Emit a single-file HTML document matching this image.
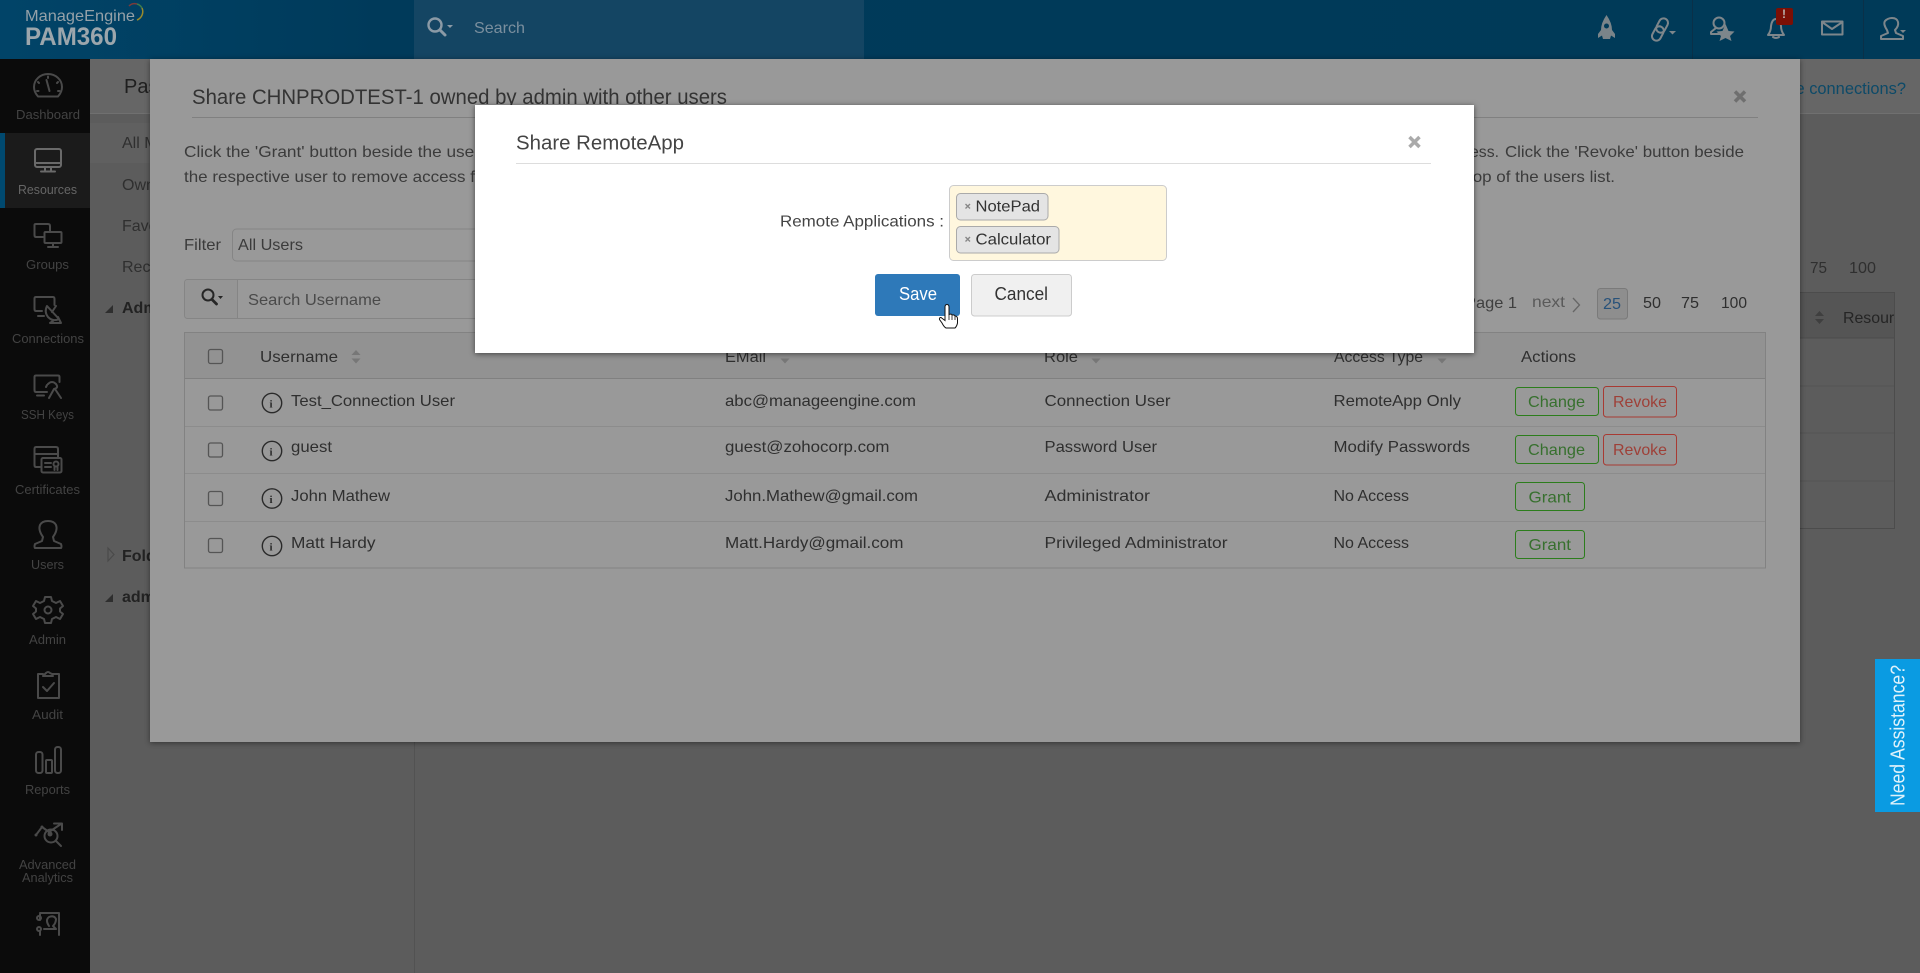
<!DOCTYPE html>
<html lang="en"><head><meta charset="utf-8"><title>PAM360 - Share RemoteApp</title>
<style>
html,body{margin:0;padding:0;background:#5c5c5c;overflow:hidden}
svg{display:block;font-family:"Liberation Sans",Arial,sans-serif}
.s{font-size:13px;fill:#434343}
.t{font-size:16px;fill:#2f2f2f}
.p{font-size:16px;fill:#3b3b3b}
.b{font-size:16px;font-weight:bold;fill:#222}
.i{fill:none;stroke:#4a4a4a;stroke-width:2;stroke-linejoin:round;stroke-linecap:round}
.h{fill:none;stroke:#7d868b;stroke-width:2;stroke-linejoin:round;stroke-linecap:round}
.cb{fill:none;stroke:#555;stroke-width:1.3}
.gb{fill:none;stroke:#2c7d1c;stroke-width:1}
.rb{fill:none;stroke:#a83a33;stroke-width:1}
.gt{font-size:16px;fill:#37702e}
.rt{font-size:16px;fill:#9e4038}
.in{fill:none;stroke:#2a2a2a;stroke-width:1.4}
.it{font-family:"Liberation Serif",serif;font-size:11px;font-weight:bold;fill:#2a2a2a}
.so{fill:#777}
</style></head><body>
<svg width="1920" height="973" viewBox="0 0 1920 973" xmlns="http://www.w3.org/2000/svg">
<defs>
<linearGradient id="hg" x1="0" x2="1" y1="0" y2="0"><stop offset="0" stop-color="#014468"/><stop offset=".2" stop-color="#003a5a"/><stop offset="1" stop-color="#003a58"/></linearGradient>
</defs>
<!-- page background -->
<rect width="1920" height="973" fill="#5c5c5c"/>
<rect x="90" y="59" width="1830" height="54" fill="#666"/>
<rect x="90" y="113" width="1830" height="1" fill="#707070"/>
<rect x="90" y="123" width="324" height="40" fill="#606060"/>
<rect x="414" y="113" width="1" height="860" fill="#525252"/>

<!-- header -->
<rect width="1920" height="59" fill="url(#hg)"/>
<rect x="414" width="450" height="59" fill="#144563"/>
<text x="25" y="21" font-size="16" fill="#95a1a8" textLength="110" lengthAdjust="spacingAndGlyphs">ManageEngine</text>
<text x="25" y="45" font-size="25" font-weight="bold" fill="#9ca6ac" textLength="92" lengthAdjust="spacingAndGlyphs">PAM360</text>
<path d="M129 6A8 8 0 0 1 137 4" fill="none" stroke="#7a3a3a" stroke-width="1.5"/>
<path d="M137 4A8 8 0 0 1 142 8" fill="none" stroke="#3d7a4d" stroke-width="1.5"/>
<path d="M142 8A9 9 0 0 1 137 20" fill="none" stroke="#998a2c" stroke-width="1.5"/>
<circle cx="435" cy="25" r="6.5" fill="none" stroke="#8b9aa6" stroke-width="2.4"/><path d="M440 30L445 35" stroke="#8b9aa6" stroke-width="3" stroke-linecap="round"/><path d="M447 25h6l-3 3z" fill="#8b9aa6"/>
<text x="474" y="33" font-size="16" fill="#7b8f9e" textLength="51" lengthAdjust="spacingAndGlyphs">Search</text>
<!-- header icons -->
<path d="M1606.5 15Q1612 23 1612 30L1615 34V38L1611 35.500L1610 39H1603L1602 35.500L1598 38V34L1601 30Q1601 23 1606.500 15Z" fill="#7a8489"/><circle cx="1606.500" cy="26" r="2.500" fill="#003a58"/>
<g transform="translate(1660 29.500) rotate(-62)"><rect class="h" x="-12" y="-4.500" width="15" height="9" rx="4.500"/><rect class="h" x="-3" y="-4.500" width="15" height="9" rx="4.500"/></g>
<path d="M1669 31h7l-3.500 3.500z" fill="#7d868b"/>
<rect x="1692" width="1" height="59" fill="#0a3048"/>
<circle cx="1719" cy="23" r="5.500" class="h"/><path class="h" d="M1716 28L1711 32V34H1722"/>
<path d="M1725.500 24L1728.500 31L1734.500 31.500L1730 36L1731.500 41L1725.500 38L1719.500 41L1721 36L1716.500 31.500L1722.500 31Z" fill="#7d868b"/>
<path class="h" d="M1768 35Q1771 31 1771 26Q1772 19 1776 19Q1780 19 1781 26Q1781 31 1784 35ZM1773 37Q1776 39 1779 37"/>
<rect x="1776" y="8" width="17" height="17" rx="2" fill="#7b0f05"/><text x="1782" y="18" font-size="12" font-weight="bold" fill="#b8b0ac">!</text>
<rect x="1822" y="21.500" width="20.500" height="13" class="h" stroke-width="1.500"/><path class="h" d="M1822 22L1832 29L1842.500 22" stroke-width="1.500"/>
<rect x="1863" width="1" height="59" fill="#0a3048"/>
<path class="h" d="M1887 30Q1883 24 1885 21Q1888 18 1892 18Q1897 18 1898 22Q1899 26 1895 30L1896 33L1903 36V39H1881V36L1888 33Z"/>
<path d="M1900 30h6l-3 3z" fill="#7d868b"/>

<!-- sidebar -->
<rect y="59" width="90" height="914" fill="#0b0b0b"/>
<rect y="133" width="90" height="75" fill="#1b1b1b"/>
<rect y="133" width="5" height="75" fill="#00496f"/>
<path class="i" d="M38 96.500H58Q62 92 62 87A14 13 0 0 0 34 87Q34 92 38 96.500Z"/><path class="i" d="M46.500 80L49.500 91M48 76.500V78M38 82l1 1M58 82l-1 1M37 91h1.500M58 91h1.500"/>
<text class="s" x="16" y="119" textLength="64" lengthAdjust="spacingAndGlyphs">Dashboard</text>
<g><rect class="i" style="stroke:#6a6a6a" x="35" y="149" width="26" height="18" rx="2"/><path class="i" style="stroke:#6a6a6a" d="M35 163H61M45 167V171M51 167V171M41 171.500H55"/></g>
<text class="s" style="fill:#666" x="18" y="194" textLength="59" lengthAdjust="spacingAndGlyphs">Resources</text>
<path class="i" d="M43 237H36Q34.500 237 34.500 235V225Q34.500 224 36 224H48Q50 224 50 226V231"/><rect class="i" x="44.500" y="232" width="17" height="11" rx="1"/><path class="i" d="M53 243V246M48 247H58"/>
<text class="s" x="26" y="269" textLength="43" lengthAdjust="spacingAndGlyphs">Groups</text>
<path class="i" d="M42 311H36Q34.500 311 34.500 309V298.500Q34.500 297 36 297H53Q54.500 297 54.500 299V305"/><path class="i" d="M38 316H44"/><path class="i" d="M47 306L59 319Q53 322 48 317Q44 312 47 306ZM52 312L56 306M53 321L50 323H61L58 317"/>
<text class="s" x="12" y="343" textLength="72" lengthAdjust="spacingAndGlyphs">Connections</text>
<path class="i" d="M47 392H36Q34.500 392 34.500 390V377Q34.500 375.500 36 375.500H58Q59.500 375.500 59.500 377V382M37 395.500H44"/><path class="i" d="M48 384Q52 380 56 384Q59 388 54 389L49 398M55 389L61 398M47 385l-1 2"/>
<text class="s" x="21" y="419" textLength="53" lengthAdjust="spacingAndGlyphs">SSH Keys</text>
<path class="i" d="M40 467H36Q34.500 467 34.500 465V449Q34.500 447 36 447H56Q58 447 58 449V457M35 454H58"/><rect class="i" x="41.500" y="458" width="20" height="14.500" rx="1.500"/><path class="i" d="M45 463H51M45 467H51" stroke-width="1.500"/><circle class="i" cx="56" cy="464" r="2.500" stroke-width="1.500"/><path class="i" d="M54.500 467V470M57.500 467V470" stroke-width="1"/>
<text class="s" x="15" y="494" textLength="65" lengthAdjust="spacingAndGlyphs">Certificates</text>
<path class="i" d="M43 537Q38 530 40 525Q42 521 48 521Q54 521 56 525Q58 530 53 537L54 541L61 544Q62 547 61 548H35Q34 547 35 544L42 541Z"/>
<text class="s" x="31" y="569" textLength="33" lengthAdjust="spacingAndGlyphs">Users</text>
<path class="i" d="M45 597H51L52 601L56 603L60 601L63 606L60 608.500V611.500L63 614L60 619L56 617L52 619L51 623H45L44 619L40 617L36 619L33 614L36 611.500V608.500L33 606L36 601L40 603L44 601Z"/><circle class="i" cx="48" cy="610" r="3.500"/>
<text class="s" x="29" y="644" textLength="37" lengthAdjust="spacingAndGlyphs">Admin</text>
<path class="i" d="M43 674H38V698H59V674H53L52 674Q50 673 50 673Q48 671 46 673L43 676H53"/><path class="i" d="M43 687L47 691L54 683"/>
<text class="s" x="32" y="719" textLength="31" lengthAdjust="spacingAndGlyphs">Audit</text>
<rect class="i" x="36" y="752" width="6.500" height="21" rx="2.500"/><rect class="i" x="46" y="760" width="6" height="13" rx="1"/><rect class="i" x="55" y="747" width="6" height="26" rx="2.500"/>
<text class="s" x="25" y="794" textLength="45" lengthAdjust="spacingAndGlyphs">Reports</text>
<path class="i" d="M36 835L42 827L49 832L61 824M54 823.500H62V830"/><circle cx="36" cy="835" r="1.500" fill="#4a4a4a"/><circle cx="42" cy="827" r="1.500" fill="#4a4a4a"/><circle class="i" cx="51" cy="836" r="6.500"/><circle cx="50" cy="834" r="2.500" fill="#4a4a4a"/><path class="i" d="M56 841L61 846"/>
<text class="s" x="19" y="869" textLength="57" lengthAdjust="spacingAndGlyphs">Advanced</text>
<text class="s" x="22" y="882" textLength="51" lengthAdjust="spacingAndGlyphs">Analytics</text>
<path class="i" d="M40 913H59V935M40 920V914M40 931V935" stroke-width="1.500"/><circle class="i" cx="39" cy="918" r="2" stroke-width="1.500"/><circle class="i" cx="39" cy="929" r="2" stroke-width="1.500"/><path class="i" d="M49 926Q45 920 49 917Q54 915 56 919Q56 923 53 926L56 929H44" stroke-width="1.500"/>

<!-- behind-modal left panel -->
<text x="124" y="93" font-size="20" fill="#1f1f1f">Passwords</text>
<text class="t" x="122" y="148" fill="#222">All My Passwords</text>
<text class="t" x="122" y="190">Owned by me</text>
<text class="t" x="122" y="231">Favourites</text>
<text class="t" x="122" y="272">Recent</text>
<path d="M105 313L113 305V313Z" fill="#2e2e2e"/>
<text class="b" x="122" y="313">Admin</text>
<path d="M108 548L114 554.500L108 561Z" fill="none" stroke="#4a4a4a" stroke-width="1.200"/>
<text class="b" x="122" y="561">Folders</text>
<path d="M105 602L113 594V602Z" fill="#2e2e2e"/>
<text class="b" x="122" y="602">admin</text>

<!-- behind-modal right content -->
<text x="1780" y="94" font-size="17" fill="#0d4a68" textLength="126" lengthAdjust="spacingAndGlyphs">live connections?</text>
<text class="t" x="1810" y="273" textLength="17" lengthAdjust="spacingAndGlyphs">75</text>
<text class="t" x="1849" y="273" textLength="27" lengthAdjust="spacingAndGlyphs">100</text>
<rect x="1700" y="292.500" width="194.500" height="45.500" fill="#555"/>
<path d="M1700 292.500H1894.500V528.500H1700M1700 338H1894.500" fill="none" stroke="#4c4c4c"/>
<path d="M1700 386H1894M1700 433H1894M1700 481H1894" stroke="#535353"/>
<path class="so" style="fill:#3f3f3f" d="M1815 316l4.500-5 4.500 5zM1815 319l4.500 5 4.500-5z"/>
<svg x="1843" y="305" width="52" height="26"><text class="t" style="fill:#252525" x="0" y="18" textLength="68" lengthAdjust="spacingAndGlyphs">Resource</text></svg>

<!-- main modal -->
<rect x="150" y="59" width="1650" height="683" fill="#999" style="filter:drop-shadow(0 1px 3px rgba(0,0,0,.45))"/>
<text x="192" y="104" font-size="21" fill="#333" textLength="535" lengthAdjust="spacingAndGlyphs">Share CHNPRODTEST-1 owned by admin with other users</text>
<rect x="192" y="117" width="1566" height="1" fill="#808080"/>
<path d="M1735 91.500L1745 101.500M1745 91.500L1735 101.500" stroke="#6f6f6f" stroke-width="3.500"/>
<text class="p" x="184" y="157" textLength="296" lengthAdjust="spacingAndGlyphs">Click the 'Grant' button beside the user</text>
<text class="p" x="184" y="182" textLength="291" lengthAdjust="spacingAndGlyphs">the respective user to remove access f</text>
<text class="p" x="1470" y="157" textLength="29" lengthAdjust="spacingAndGlyphs">ess.</text>
<text class="p" x="1505" y="157" textLength="239" lengthAdjust="spacingAndGlyphs">Click the 'Revoke' button beside</text>
<text class="p" x="1468" y="182" textLength="147" lengthAdjust="spacingAndGlyphs">top of the users list.</text>
<text class="p" x="184" y="250" textLength="37" lengthAdjust="spacingAndGlyphs">Filter</text>
<rect x="232.500" y="229" width="280" height="32" rx="4" fill="#999" stroke="#858585"/>
<text class="p" x="238" y="250" textLength="65" lengthAdjust="spacingAndGlyphs">All Users</text>
<rect x="184.500" y="279.500" width="320" height="39" rx="3" fill="#999" stroke="#858585"/>
<path d="M185 282.500Q185 280 188 280H237V318H188Q185 318 185 315Z" fill="#959595"/>
<rect x="237" y="280" width="1" height="38" fill="#858585"/>
<circle cx="208" cy="295" r="5.500" fill="none" stroke="#262626" stroke-width="2"/><path d="M212 299.500L216.500 304" stroke="#262626" stroke-width="2.800" stroke-linecap="round"/><path d="M218 296h5l-2.500 3z" fill="#262626"/>
<text class="p" style="fill:#4a4a4a" x="248" y="305" textLength="133" lengthAdjust="spacingAndGlyphs">Search Username</text>
<text class="t" style="fill:#3f3f3f" x="1465" y="308" textLength="52" lengthAdjust="spacingAndGlyphs">Page 1</text>
<text class="t" style="fill:#5a5a5a" x="1532" y="307" textLength="33" lengthAdjust="spacingAndGlyphs">next</text>
<path d="M1573 298L1579.500 305L1573 312" fill="none" stroke="#666" stroke-width="1.300"/>
<rect x="1597.500" y="288.500" width="30" height="30.500" rx="3" fill="#8e8e8e" stroke="#7a7a7a"/>
<text class="t" style="fill:#28527a" x="1603" y="309" textLength="18" lengthAdjust="spacingAndGlyphs">25</text>
<text class="t" x="1643" y="308" textLength="18" lengthAdjust="spacingAndGlyphs">50</text>
<text class="t" x="1681" y="308" textLength="18" lengthAdjust="spacingAndGlyphs">75</text>
<text class="t" x="1721" y="308" textLength="26" lengthAdjust="spacingAndGlyphs">100</text>

<!-- table -->
<rect x="184.500" y="332.500" width="1581" height="46" fill="#929292"/>
<rect x="184.500" y="332.500" width="1581" height="235.500" fill="none" stroke="#828282"/>
<path d="M185 378.500H1765" stroke="#808080"/>
<path d="M185 426.500H1765M185 473.500H1765M185 521.500H1765" stroke="#8c8c8c"/>
<rect class="cb" x="208.500" y="349.500" width="14" height="14" rx="2"/>
<rect class="cb" x="208.500" y="396" width="14" height="14" rx="2"/>
<rect class="cb" x="208.500" y="443" width="14" height="14" rx="2"/>
<rect class="cb" x="208.500" y="491.500" width="14" height="14" rx="2"/>
<rect class="cb" x="208.500" y="538.500" width="14" height="14" rx="2"/>
<text class="t" x="260" y="362" textLength="78" lengthAdjust="spacingAndGlyphs">Username</text>
<path class="so" d="M351.500 355l4.500-5 4.500 5zM351.500 358.500l4.500 5 4.500-5z"/>
<text class="t" x="725" y="362" textLength="41" lengthAdjust="spacingAndGlyphs">EMail</text>
<path class="so" d="M780.500 358.500l4.500 5 4.500-5z"/>
<text class="t" x="1044" y="362" textLength="34" lengthAdjust="spacingAndGlyphs">Role</text>
<path class="so" d="M1091.500 358.500l4.500 5 4.500-5z"/>
<text class="t" x="1334" y="362" textLength="89" lengthAdjust="spacingAndGlyphs">Access Type</text>
<path class="so" d="M1437.500 358.500l4.500 5 4.500-5z"/>
<text class="t" x="1521" y="362" textLength="55" lengthAdjust="spacingAndGlyphs">Actions</text>

<g>
<circle class="in" cx="272" cy="403" r="9.700"/><text class="it" x="269.500" y="407.500">i</text>
<text class="t" x="291" y="406" textLength="164" lengthAdjust="spacingAndGlyphs">Test_Connection User</text>
<text class="t" x="725" y="406" textLength="191" lengthAdjust="spacingAndGlyphs">abc@manageengine.com</text>
<text class="t" x="1044.500" y="406" textLength="126" lengthAdjust="spacingAndGlyphs">Connection User</text>
<text class="t" x="1333.500" y="406" textLength="127.500" lengthAdjust="spacingAndGlyphs">RemoteApp Only</text>
<rect class="gb" x="1515.500" y="387.500" width="83" height="28" rx="3"/>
<text class="gt" x="1528" y="407" textLength="57" lengthAdjust="spacingAndGlyphs">Change</text>
<rect class="rb" x="1603.500" y="386.500" width="73" height="30.500" rx="3"/>
<text class="rt" x="1613" y="407" textLength="54" lengthAdjust="spacingAndGlyphs">Revoke</text>
</g>
<g>
<circle class="in" cx="272" cy="451" r="9.700"/><text class="it" x="269.500" y="455.500">i</text>
<text class="t" x="291" y="452" textLength="41" lengthAdjust="spacingAndGlyphs">guest</text>
<text class="t" x="725" y="452" textLength="164.500" lengthAdjust="spacingAndGlyphs">guest@zohocorp.com</text>
<text class="t" x="1044.500" y="452" textLength="112.500" lengthAdjust="spacingAndGlyphs">Password User</text>
<text class="t" x="1333.500" y="452" textLength="136.500" lengthAdjust="spacingAndGlyphs">Modify Passwords</text>
<rect class="gb" x="1515.500" y="435.500" width="83" height="28" rx="3"/>
<text class="gt" x="1528" y="455" textLength="57" lengthAdjust="spacingAndGlyphs">Change</text>
<rect class="rb" x="1603.500" y="434.500" width="73" height="30.500" rx="3"/>
<text class="rt" x="1613" y="455" textLength="54" lengthAdjust="spacingAndGlyphs">Revoke</text>
</g>
<g>
<circle class="in" cx="272" cy="498.500" r="9.700"/><text class="it" x="269.500" y="503">i</text>
<text class="t" x="291" y="501" textLength="99" lengthAdjust="spacingAndGlyphs">John Mathew</text>
<text class="t" x="725" y="501" textLength="193" lengthAdjust="spacingAndGlyphs">John.Mathew@gmail.com</text>
<text class="t" x="1044.500" y="501" textLength="105.500" lengthAdjust="spacingAndGlyphs">Administrator</text>
<text class="t" x="1333.500" y="501" textLength="75.500" lengthAdjust="spacingAndGlyphs">No Access</text>
<rect class="gb" x="1515.500" y="482.500" width="69" height="28" rx="3"/>
<text class="gt" x="1528.500" y="502.500" textLength="42.500" lengthAdjust="spacingAndGlyphs">Grant</text>
</g>
<g>
<circle class="in" cx="272" cy="546" r="9.700"/><text class="it" x="269.500" y="550.500">i</text>
<text class="t" x="291" y="548" textLength="84.500" lengthAdjust="spacingAndGlyphs">Matt Hardy</text>
<text class="t" x="725" y="548" textLength="178.500" lengthAdjust="spacingAndGlyphs">Matt.Hardy@gmail.com</text>
<text class="t" x="1044.500" y="548" textLength="183" lengthAdjust="spacingAndGlyphs">Privileged Administrator</text>
<text class="t" x="1333.500" y="548" textLength="75.500" lengthAdjust="spacingAndGlyphs">No Access</text>
<rect class="gb" x="1515.500" y="530.500" width="69" height="28" rx="3"/>
<text class="gt" x="1528.500" y="550" textLength="42.500" lengthAdjust="spacingAndGlyphs">Grant</text>
</g>

<!-- need assistance -->
<rect x="1875" y="659" width="45" height="153" fill="#0a9be2"/>
<text transform="translate(1904.500 806) rotate(-90)" font-size="20" fill="#dff2fb" textLength="141" lengthAdjust="spacingAndGlyphs">Need Assistance?</text>

<!-- top modal -->
<rect x="475" y="105" width="999" height="248" fill="#fff" style="filter:drop-shadow(0 1px 3px rgba(0,0,0,.55))"/>
<text x="516" y="149.500" font-size="20" fill="#444" textLength="168" lengthAdjust="spacingAndGlyphs">Share RemoteApp</text>
<rect x="516" y="163" width="915" height="1" fill="#ddd"/>
<path d="M1409.500 137L1419.500 147M1419.500 137L1409.500 147" stroke="#aaa" stroke-width="3.500"/>
<text x="780" y="226.500" font-size="16" fill="#444" textLength="164" lengthAdjust="spacingAndGlyphs">Remote Applications :</text>
<rect x="949.500" y="185.500" width="217" height="75" rx="4" fill="#fff7de" stroke="#ccc"/>
<rect x="956.500" y="193.500" width="91.500" height="26.500" rx="4" fill="#e4e4e4" stroke="#aaa"/>
<path d="M965.500 204L970 208.500M970 204L965.500 208.500" stroke="#888" stroke-width="1.400"/>
<text x="975.500" y="211.500" font-size="16" fill="#333" textLength="64.500" lengthAdjust="spacingAndGlyphs">NotePad</text>
<rect x="956.500" y="226.500" width="102.500" height="26.500" rx="4" fill="#e4e4e4" stroke="#aaa"/>
<path d="M965.500 237L970 241.500M970 237L965.500 241.500" stroke="#888" stroke-width="1.400"/>
<text x="975.500" y="244.500" font-size="16" fill="#333" textLength="75.500" lengthAdjust="spacingAndGlyphs">Calculator</text>
<rect x="875" y="274" width="85" height="42" rx="3" fill="#2e79b9"/>
<text x="899" y="300" font-size="18" fill="#fff" textLength="38" lengthAdjust="spacingAndGlyphs">Save</text>
<rect x="971.500" y="274.500" width="100" height="41.500" rx="3" fill="#f0f0f0" stroke="#ccc"/>
<text x="994.500" y="300" font-size="18" fill="#333" textLength="53.500" lengthAdjust="spacingAndGlyphs">Cancel</text>
<!-- hand cursor -->
<path d="M945 307Q945 304.500 947 304.500Q949 304.500 949 307V314.500Q951.500 313.500 952 315Q954.500 314.500 955 316Q957.500 316 957.500 319V323Q957 326 955 328H946Q944 327 942 323L939.500 319.500Q939 317.500 941 317.500L945 320.500Z" fill="#fff" stroke="#111" stroke-width="1"/>
<path d="M949 315V320M952 315.500V320M955 316.500V320" stroke="#111" stroke-width=".8"/>
</svg>
</body></html>
